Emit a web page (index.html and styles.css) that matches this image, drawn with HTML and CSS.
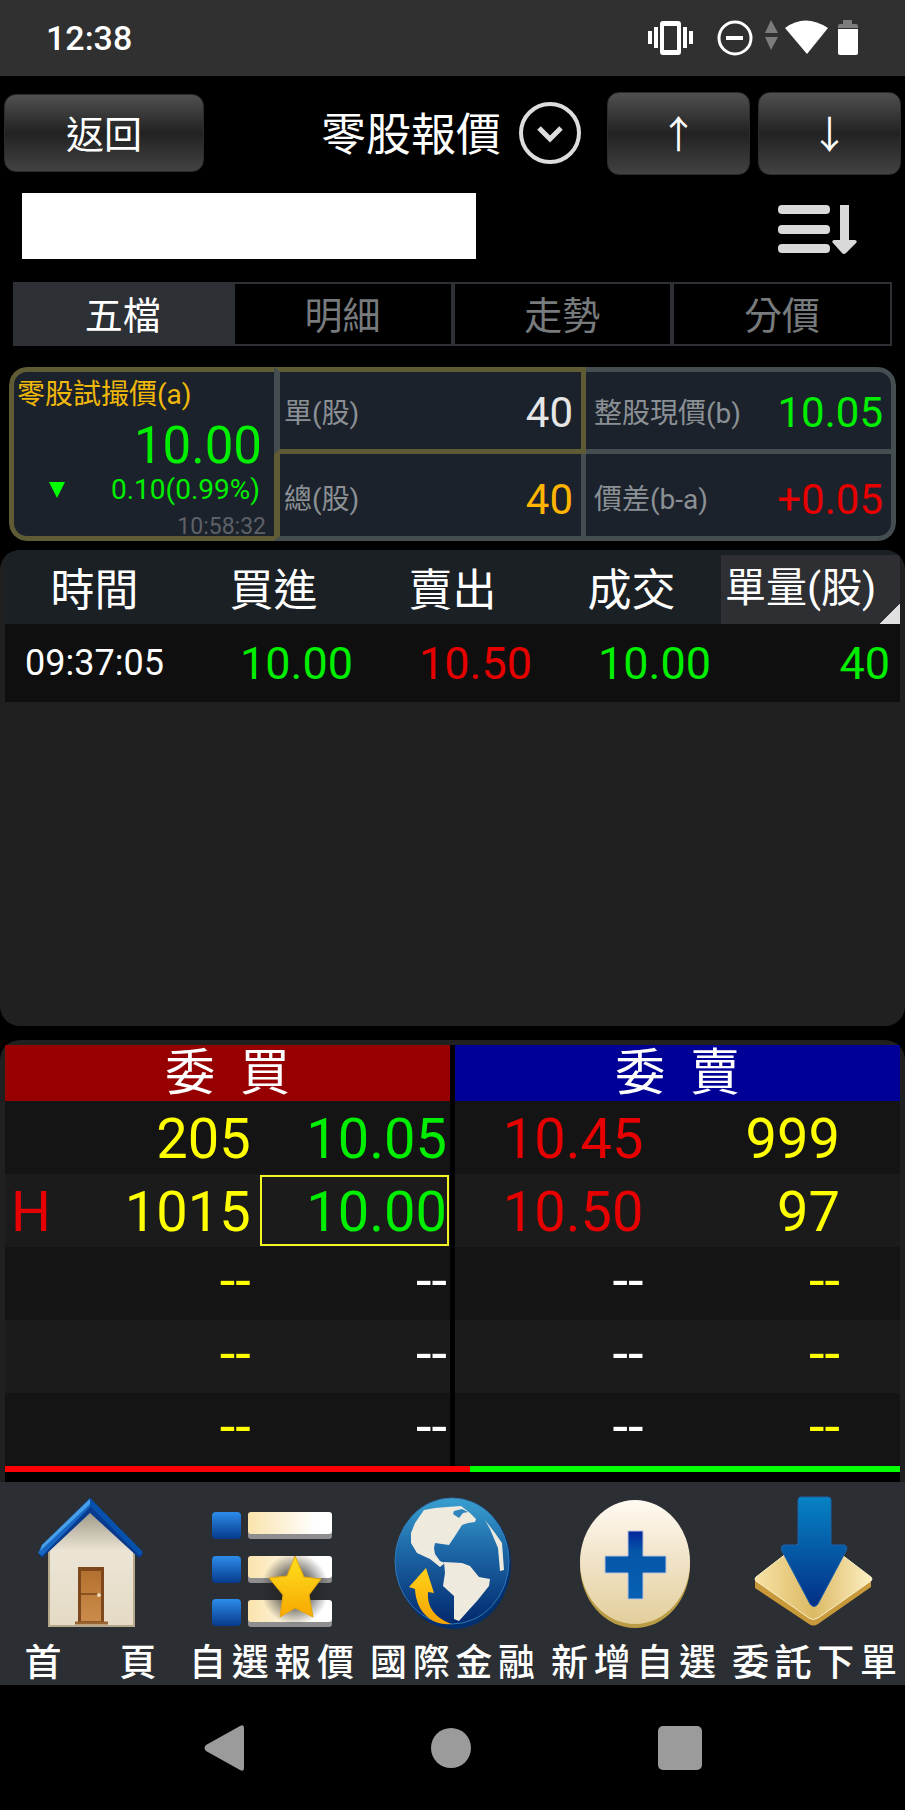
FILE: index.html
```html
<!DOCTYPE html>
<html lang="zh-Hant">

<head>
    <meta charset="UTF-8">
    <meta name="viewport" content="width=device-width, initial-scale=1">
    <title>零股報價</title>
    <link rel="stylesheet" href="styles.css">
</head>

<body>
    <div class="status-bar">
        <span class="clock">12:38</span>
        <svg class="status-icons" viewBox="0 0 212 40" width="212" height="40">
            <g fill="#fff">
                <path fill-rule="evenodd" d="M16 3h15q3 0 3 3v28q0 3-3 3H16q-3 0-3-3V6q0-3 3-3zm1 5v24h13V8z" />
                <path d="M7 9h4v21H7zM1 13h4v13H1zM36 9h4v21h-4zM42 13h4v13h-4z" />
                <path d="M79 18h17v4H79z" />
                <path d="M138 10q20-15 43 0L160 36z" />
                <path d="M191 11h20v24q0 2-2 2h-16q-2 0-2-2z" />
            </g>
            <circle cx="88" cy="20" r="16" fill="none" stroke="#fff" stroke-width="3" />
            <g fill="#7c7c7c">
                <path d="M118 15l6-13 7 13zM118 19h13l-7 13z" />
                <path d="M191 10V8q0-2 2-2h3V2h9v4h4q2 0 2 2v2z" />
            </g>
        </svg>
    </div>

    <header class="title-bar">
        <button class="btn btn-back" type="button">返回</button>
        <div class="title">
            <h1>零股報價</h1>
            <button class="btn-drop" type="button" aria-label="選單">
                <svg viewBox="0 0 62 62" width="62" height="62" fill="none">
                    <circle cx="31" cy="31" r="29" stroke="#ddd" stroke-width="4" />
                    <path d="M20 26l11 11 11-11" stroke="#ddd" stroke-width="5" />
                </svg>
            </button>
        </div>
        <button class="btn btn-arrow" type="button">↑</button>
        <button class="btn btn-arrow" type="button">↓</button>
    </header>

    <div class="search-row">
        <input class="stock-name" type="text" aria-label="股票">
        <button class="btn-sort" type="button" aria-label="排序">
            <svg viewBox="0 0 80 50" width="80" height="50" fill="#d9d9d9">
                <rect x="1" y="0" width="52" height="9" rx="4" />
                <rect x="1" y="20" width="52" height="9" rx="4" />
                <rect x="1" y="39" width="52" height="9" rx="4" />
                <path d="M63 0h9v35h6q3 1 1 3L69 48q-2 2-4 0L56 38q-2-2 1-3h6z" />
            </svg>
        </button>
    </div>

    <nav class="tabs">
        <button class="tab active" type="button">五檔</button>
        <button class="tab" type="button">明細</button>
        <button class="tab" type="button">走勢</button>
        <button class="tab" type="button">分價</button>
    </nav>

    <section class="quote">
        <div class="cell cell-trial">
            <div class="trial-title">零股試撮價(a)</div>
            <div class="trial-price green">10.00</div>
            <div class="trial-change green">
                <svg viewBox="0 0 16 16" width="16" height="16"><path d="M0 0h16L8 16z" fill="#0f0" /></svg>
                <span>0.10(0.99%)</span>
            </div>
            <div class="trial-time">10:58:32</div>
        </div>
        <div class="cell cell-unit"><span>單(股)</span><b>40</b></div>
        <div class="cell cell-spot"><span>整股現價(b)</span><b class="green">10.05</b></div>
        <div class="cell cell-total"><span>總(股)</span><b class="orange">40</b></div>
        <div class="cell cell-diff"><span>價差(b-a)</span><b class="red">+0.05</b></div>
    </section>

    <section class="history">
        <table>
            <thead>
                <tr>
                    <th>時間</th>
                    <th>買進</th>
                    <th>賣出</th>
                    <th>成交</th>
                    <th class="unit"><div>單量(股)</div></th>
                </tr>
            </thead>
            <tbody>
                <tr>
                    <td class="time">09:37:05</td>
                    <td class="green">10.00</td>
                    <td class="red">10.50</td>
                    <td class="green">10.00</td>
                    <td class="green">40</td>
                </tr>
            </tbody>
        </table>
    </section>

    <section class="book">
        <div class="sides">
            <table class="bid">
                <colgroup>
                    <col class="col-mark">
                    <col>
                    <col class="col-price">
                </colgroup>
                <thead>
                    <tr><th colspan="3">委&nbsp; 買</th></tr>
                </thead>
                <tbody>
                    <tr><td></td><td>205</td><td class="green">10.05</td></tr>
                    <tr><td class="mark red">H</td><td>1015</td><td class="green boxed">10.00</td></tr>
                    <tr class="empty"><td></td><td>--</td><td class="white">--</td></tr>
                    <tr class="empty"><td></td><td>--</td><td class="white">--</td></tr>
                    <tr class="empty"><td></td><td>--</td><td class="white">--</td></tr>
                </tbody>
            </table>
            <table class="ask">
                <thead>
                    <tr><th colspan="2">委&nbsp; 賣</th></tr>
                </thead>
                <tbody>
                    <tr><td class="red">10.45</td><td>999</td></tr>
                    <tr><td class="red">10.50</td><td>97</td></tr>
                    <tr class="empty"><td class="white">--</td><td>--</td></tr>
                    <tr class="empty"><td class="white">--</td><td>--</td></tr>
                    <tr class="empty"><td class="white">--</td><td>--</td></tr>
                </tbody>
            </table>
        </div>
        <div class="ratio"><div class="ratio-bid" style="width: 52%"></div></div>
    </section>

    <nav class="menu">
        <a href="#home">
            <svg viewBox="0 0 140 140" width="140" height="140">
                <defs>
                    <linearGradient id="wall" x1="0" y1="0" x2="0" y2="1">
                        <stop offset="0" stop-color="#9d9788" />
                        <stop offset=".35" stop-color="#ece5d6" />
                        <stop offset="1" stop-color="#e4dac5" />
                    </linearGradient>
                    <linearGradient id="door" x1="0" y1="0" x2="0" y2="1">
                        <stop offset="0" stop-color="#b3712f" />
                        <stop offset="1" stop-color="#cb8c4b" />
                    </linearGradient>
                </defs>
                <path d="M28 58L69 20l44 38v77H28z" fill="url(#wall)" stroke="#b5a88a" stroke-width="2" />
                <rect x="57" y="76" width="26" height="56" fill="#7e481c" />
                <rect x="60" y="80" width="20" height="50" fill="url(#door)" />
                <path d="M60 103h20" stroke="#8c5322" stroke-width="2" />
                <path d="M54 132h33" stroke="#9a6430" stroke-width="3" />
                <circle cx="78" cy="104" r="2" fill="#f2d9b8" />
                <path d="M18 63l3 4 48-45 49 45 4-4L69 7z" fill="#083a8e" />
                <path d="M69 7l53 54-3 4-50-50z" fill="#0650ae" />
                <path d="M69 7v9L21 65l-4-3 4-8z" fill="#1767c2" />
                <path d="M69 8v5L19 60l2-6z" fill="#49a0ea" />
            </svg>
            <span class="short">首頁</span>
        </a>
        <a href="#watchlist">
            <svg viewBox="0 0 140 140" width="140" height="140">
                <defs>
                    <linearGradient id="box" x1="0" y1="0" x2="0" y2="1">
                        <stop offset="0" stop-color="#2c8cea" />
                        <stop offset="1" stop-color="#063a8c" />
                    </linearGradient>
                    <linearGradient id="line">
                        <stop offset="0" stop-color="#fae3ac" />
                        <stop offset=".8" stop-color="#fff" />
                    </linearGradient>
                    <linearGradient id="star" x1="0" y1="0" x2="0" y2="1">
                        <stop offset="0" stop-color="#ffe01f" />
                        <stop offset="1" stop-color="#f8a800" />
                    </linearGradient>
                    <radialGradient id="shade">
                        <stop offset=".5" stop-color="#222" stop-opacity=".6" />
                        <stop offset="1" stop-color="#222" stop-opacity="0" />
                    </radialGradient>
                </defs>
                <g fill="#8e8e90">
                    <rect x="46" y="22" width="84" height="26" rx="3" />
                    <rect x="46" y="66" width="84" height="26" rx="3" />
                    <rect x="46" y="110" width="84" height="26" rx="3" />
                </g>
                <g fill="url(#line)">
                    <rect x="46" y="21" width="84" height="22" rx="3" />
                    <rect x="46" y="65" width="84" height="22" rx="3" />
                    <rect x="46" y="109" width="84" height="22" rx="3" />
                </g>
                <g fill="url(#box)">
                    <rect x="10" y="21" width="29" height="27" rx="4" />
                    <rect x="10" y="65" width="29" height="27" rx="4" />
                    <rect x="10" y="108" width="29" height="27" rx="4" />
                </g>
                <ellipse cx="93" cy="98" rx="34" ry="36" fill="url(#shade)" />
                <path d="M93 65l9 21 17 2-12 16 4 22-18-9-15 9 3-22-14-17 18-2z" fill="url(#star)" stroke="#e5a50a" />
            </svg>
            <span>自選報價</span>
        </a>
        <a href="#global">
            <svg viewBox="0 0 140 140" width="140" height="140">
                <defs>
                    <linearGradient id="sea" x1="0" y1="0" x2="0" y2="1">
                        <stop offset="0" stop-color="#3aa0d0" />
                        <stop offset=".4" stop-color="#1e69a8" />
                        <stop offset="1" stop-color="#02296e" />
                    </linearGradient>
                    <linearGradient id="gold" x1="0" y1="0" x2="0" y2="1">
                        <stop offset="0" stop-color="#ffd21c" />
                        <stop offset="1" stop-color="#f5a300" />
                    </linearGradient>
                </defs>
                <ellipse cx="71" cy="73" rx="57" ry="65" fill="#02306f" />
                <ellipse cx="69" cy="70" rx="57" ry="63" fill="url(#sea)" stroke="#2f78b8" />
                <g fill="#eeeade">
                    <path d="M41 19l11-2 12-1 14-1 9 7 6 6-1 3-7 1-6 2-7 11-6 9-14-2-1 5 1 6 5 7 5 2-5 4-10-8-13-6-6-10V42l4-10z" />
                    <path d="M61 71l18 1 8 3 9 11 11 2-1 7-12 15-10 11-8 9-5-2v-23L60 95l2-13z" />
                    <path d="M102 29l10 13 7 10 2 27-4 1-2-23-8-19z" />
                </g>
                <path d="M71 20l8-2 6 3-5 1-4 5-6-4z" fill="#2f86bd" />
                <path d="M43 77l8 25-6-1q-2 22 23 32-13 1-21-5-14-10-15-30l-6-2z" fill="url(#gold)" />
            </svg>
            <span>國際金融</span>
        </a>
        <a href="#add">
            <svg viewBox="0 0 140 140" width="140" height="140">
                <defs>
                    <linearGradient id="coin" x1="0" y1="0" x2="0" y2="1">
                        <stop offset="0" stop-color="#fffaf2" />
                        <stop offset=".5" stop-color="#f0e2c6" />
                        <stop offset="1" stop-color="#e3cf9c" />
                    </linearGradient>
                    <linearGradient id="plus" x1="0" y1="0" x2="0" y2="1">
                        <stop offset="0" stop-color="#02259b" />
                        <stop offset=".3" stop-color="#0656a8" />
                        <stop offset="1" stop-color="#0660b4" />
                    </linearGradient>
                </defs>
                <ellipse cx="71" cy="74" rx="55" ry="63" fill="#b99c45" />
                <ellipse cx="71" cy="71" rx="55" ry="62" fill="url(#coin)" />
                <path d="M64 40h15v25h23v17H79v26H64V82H41V65h23z" fill="url(#plus)" stroke="#b8c3dc" />
            </svg>
            <span>新增自選</span>
        </a>
        <a href="#order">
            <svg viewBox="0 0 140 140" width="140" height="140">
                <defs>
                    <linearGradient id="tile" x1="0" y1="0" x2="1" y2="0">
                        <stop offset="0" stop-color="#f7e3a6" />
                        <stop offset=".5" stop-color="#dcb964" />
                        <stop offset="1" stop-color="#fdf0c4" />
                    </linearGradient>
                    <linearGradient id="arrow" x1="0" y1="0" x2="0" y2="1">
                        <stop offset="0" stop-color="#0683c4" />
                        <stop offset="1" stop-color="#022f86" />
                    </linearGradient>
                </defs>
                <path d="M10 88l116 0v8l-53 37q-5 3-9 0L10 97z" fill="#c8993a" />
                <path d="M11 86l53-41q4-2 8 0l54 41q2 2 0 4l-53 37q-5 3-9 0L11 90q-2-2 0-4z" fill="url(#tile)" stroke="#f9edc6" />
                <path d="M56 6h27q3 0 3 3v45h14q3 2 1 6l-28 53q-4 5-8 0L37 60q-2-5 2-6h14V9q0-3 3-3z" fill="url(#arrow)" stroke="#1a62ad" />
            </svg>
            <span>委託下單</span>
        </a>
    </nav>

    <footer class="system-nav">
        <svg viewBox="0 0 40 46" width="40" height="46"><path d="M36 1q4-2 4 2v40q0 4-4 2L2 26q-3-3 0-6z" fill="#9b9b9b" /></svg>
        <svg viewBox="0 0 40 40" width="40" height="40"><circle cx="20" cy="20" r="20" fill="#9b9b9b" /></svg>
        <svg viewBox="0 0 44 44" width="44" height="44"><rect width="44" height="44" rx="5" fill="#9b9b9b" /></svg>
    </footer>
</body>

</html>
```
FILE: styles.css
```css
* {
    box-sizing: border-box;
}

body {
    margin: 0;
    background: #000;
    color: #fff;
    font-family: Roboto, "Noto Sans CJK TC", sans-serif;
}

svg {
    display: block;
}

button {
    padding: 0;
    border: 0;
    background: none;
    color: inherit;
    font-family: inherit;
}

table {
    border-collapse: collapse;
    table-layout: fixed;
    width: 100%;
}

th,
td {
    padding: 0;
    font-weight: 400;
}

.green {
    color: #0e0;
}

.red {
    color: #e60000;
}

/* phone status bar */
.status-bar {
    display: flex;
    justify-content: space-between;
    align-items: center;
    height: 76px;
    padding: 0 46px;
    background: #303030;
}

.clock {
    font-size: 34px;
    font-weight: 500;
}

/* title bar */
.title-bar {
    display: flex;
    align-items: center;
    gap: 8px;
    height: 112px;
    padding: 2px 4px 0;
}

.btn {
    padding-bottom: 4px;
    border: 1px solid #2c2c2c;
    border-radius: 12px;
    background-image: linear-gradient(#505050, #222 50%, #424242);
    font-size: 38px;
}

.btn-back {
    width: 200px;
    height: 78px;
}

.btn-arrow {
    width: 143px;
    height: 83px;
}

.title {
    flex: 1;
    display: flex;
    justify-content: flex-end;
    align-items: center;
    gap: 18px;
    padding-right: 18px;
}

.title h1 {
    margin: 0;
    padding-bottom: 4px;
    font-size: 45px;
    font-weight: 400;
}

/* search row */
.search-row {
    display: flex;
    justify-content: space-between;
    align-items: center;
    height: 76px;
    padding: 0 48px 0 22px;
}

.stock-name {
    flex: 0 1 454px;
    min-width: 0;
    height: 66px;
    padding: 0 12px;
    border: 0;
    background: #fff;
    font-size: 38px;
}

.btn-sort {
    padding-top: 8px;
}

/* tabs */
.tabs {
    display: flex;
    gap: 4px;
    margin: 18px 13px 0;
    padding: 2px;
    background: #2d3136;
}

.tab {
    flex: 1;
    height: 60px;
    padding-bottom: 4px;
    background: #000;
    color: #777b7d;
    font-size: 38px;
}

.tab.active {
    background: #2d3136;
    color: #fff;
}

/* quote summary */
.quote {
    display: grid;
    grid-template-columns: 265fr 312fr 310fr;
    grid-template-rows: 87px 87px;
    margin: 21px 9px 0;
    border-radius: 18px;
    overflow: hidden;
}

.cell {
    display: flex;
    justify-content: space-between;
    align-items: center;
    padding: 0 8px 0 4px;
    border: 0 solid #444d50;
    background: #1c222b;
    color: #8b9095;
    font-size: 28px;
}

.cell b {
    padding-top: 4px;
    color: #e6e6e6;
    font-size: 42px;
    font-weight: 400;
}

.cell .green {
    color: #0e0;
}

.cell .red {
    color: #e60000;
}

.cell .orange {
    color: #ffb400;
}

.cell-trial {
    grid-row: span 2;
    flex-direction: column;
    align-items: stretch;
    justify-content: flex-start;
    padding: 4px 8px 0 3px;
    border-width: 5px 0 5px 5px;
    border-color: #5f5c35;
    border-radius: 18px 0 0 18px;
}

.cell-unit {
    border-width: 5px 5px 5px 6px;
    border-color: #5f5c35 #5f5c35 #5f5c35 #444d50;
}

.cell-total {
    border-width: 0 5px 5px 6px;
    border-color: #444d50 #444d50 #444d50 #5f5c35;
}

.cell-spot,
.cell-diff {
    padding-left: 8px;
}

.cell-spot {
    border-width: 5px 5px 5px 0;
    border-top-right-radius: 18px;
}

.cell-diff {
    border-width: 0 5px 5px 0;
    border-bottom-right-radius: 18px;
}

.cell-total,
.cell-diff {
    padding-top: 4px;
}

.trial-title {
    color: #f0b90a;
    line-height: 38px;
}

.trial-price {
    padding-right: 4px;
    font-size: 51px;
    line-height: 64px;
    text-align: right;
}

.trial-change {
    display: flex;
    justify-content: space-between;
    align-items: center;
    padding: 0 6px 0 32px;
    line-height: 24px;
}

.trial-time {
    color: #5d6167;
    font-size: 23px;
    line-height: 50px;
    text-align: right;
}

/* trade history */
.history {
    height: 476px;
    margin-top: 9px;
    padding: 0 5px;
    border-radius: 20px;
    background: #202020;
    overflow: hidden;
}

.history th {
    height: 74px;
    padding-top: 8px;
    background: #1b2024;
    font-size: 44px;
    line-height: 66px;
}

.history .unit {
    padding-top: 5px;
    font-size: 41px;
}

.unit div {
    height: 69px;
    padding-left: 4px;
    background: linear-gradient(135deg, transparent 50%, #e0e0e0 50%) right bottom / 20px 20px no-repeat #2d2f33;
    text-align: left;
}

.history td {
    height: 78px;
    padding-right: 10px;
    background: #0f0f0f;
    font-size: 45px;
    text-align: right;
}

.history .time {
    padding: 0;
    font-size: 36px;
    text-align: center;
}

/* order book */
.book {
    margin-top: 14px;
    padding: 5px 5px 0;
    border-radius: 20px 20px 0 0;
    background: #202020;
}

.sides {
    display: flex;
    gap: 5px;
    background: #000;
}

.book th {
    height: 56px;
    font-size: 50px;
    line-height: 56px;
}

.bid th {
    background: #960000;
}

.ask th {
    background: #000096;
}

.book tr {
    background: #141414;
}

.book tbody tr:nth-child(even) {
    background: #1b1b1b;
}

.book td {
    height: 73px;
    padding-top: 2px;
    color: #ff0;
    font-size: 56px;
    line-height: 66px;
    text-align: right;
}

.book .empty td {
    padding-top: 0;
    padding-bottom: 6px;
}

.col-mark {
    width: 12%;
}

.col-price {
    width: 43%;
}

.bid td:nth-child(2) {
    padding-right: 8px;
}

.bid td:nth-child(3) {
    padding-right: 3px;
}

.ask td:nth-child(1) {
    padding-right: 34px;
}

.ask td:nth-child(2) {
    padding-right: 60px;
}

.book .green {
    color: #0e0;
}

.book .red {
    color: #e60000;
}

.book .white {
    color: #fff;
}

.book .mark {
    padding-left: 6px;
    text-align: left;
}

.book .boxed {
    outline: 2px solid #f5f520;
    outline-offset: -3px;
}

.ratio {
    height: 16px;
    border-bottom: 10px solid #000;
    background: #0f0;
}

.ratio-bid {
    height: 6px;
    background: #f00;
}

/* bottom menu */
.menu {
    display: grid;
    grid-template-columns: repeat(5, 1fr);
    height: 203px;
    padding-top: 9px;
    background: #2b2f33;
}

.menu a {
    display: flex;
    flex-direction: column;
    align-items: center;
    color: #fff;
    text-decoration: none;
}

.menu span {
    width: 165px;
    font-size: 37px;
    font-weight: 500;
    line-height: 66px;
    text-align: justify;
    text-align-last: justify;
}

.menu .short {
    width: 132px;
}

.system-nav {
    display: flex;
    justify-content: center;
    align-items: center;
    gap: 187px;
    height: 125px;
}
```
